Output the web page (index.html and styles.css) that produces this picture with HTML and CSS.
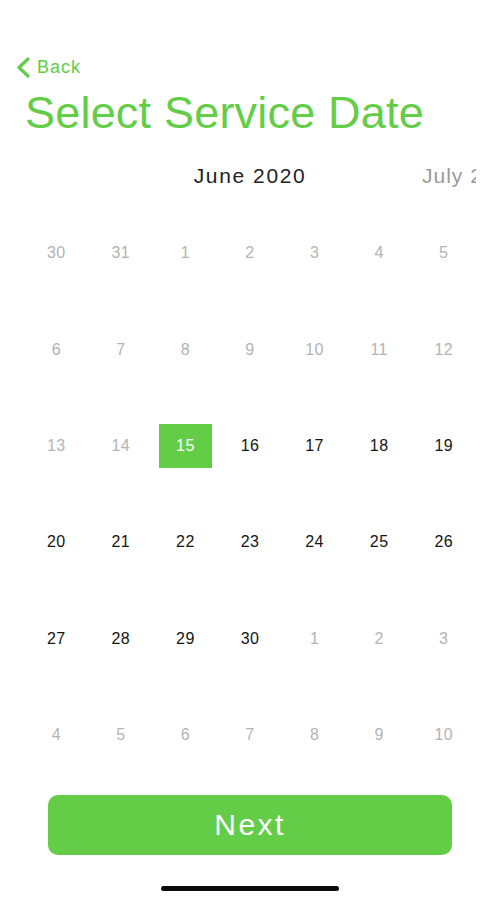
FILE: index.html
```html
<!DOCTYPE html>
<html lang="en">
<head>
<meta charset="utf-8">
<title>Select Service Date</title>
<link rel="stylesheet" href="styles.css">
</head>
<body>
<div class="screen">
  <nav class="nav">
    <a class="back" href="#">
      <svg class="chev" width="16" height="21" viewBox="0 0 16 21"><path d="M13 2 L4 10.5 L13 19" fill="none" stroke="#63cd47" stroke-width="3.2" stroke-linecap="round" stroke-linejoin="round"/></svg>
      <span>Back</span>
    </a>
  </nav>
  <h1 class="title">Select Service Date</h1>
  <div class="months">
    <div class="month-track">
      <div class="month current">June 2020</div>
      <div class="month next-month">July 2020</div>
    </div>
  </div>
  <div class="grid">
    <div class="day muted">30</div><div class="day muted">31</div><div class="day muted">1</div><div class="day muted">2</div><div class="day muted">3</div><div class="day muted">4</div><div class="day muted">5</div>
    <div class="day muted">6</div><div class="day muted">7</div><div class="day muted">8</div><div class="day muted">9</div><div class="day muted">10</div><div class="day muted">11</div><div class="day muted">12</div>
    <div class="day muted">13</div><div class="day muted">14</div><div class="day"><span class="sel">15</span></div><div class="day">16</div><div class="day">17</div><div class="day">18</div><div class="day">19</div>
    <div class="day">20</div><div class="day">21</div><div class="day">22</div><div class="day">23</div><div class="day">24</div><div class="day">25</div><div class="day">26</div>
    <div class="day">27</div><div class="day">28</div><div class="day">29</div><div class="day">30</div><div class="day muted">1</div><div class="day muted">2</div><div class="day muted">3</div>
    <div class="day muted">4</div><div class="day muted">5</div><div class="day muted">6</div><div class="day muted">7</div><div class="day muted">8</div><div class="day muted">9</div><div class="day muted">10</div>
  </div>
  <button class="next">Next</button>
  <div class="home-indicator"></div>
</div>
</body>
</html>
```

FILE: styles.css
```css
* { box-sizing: border-box; }
html, body { margin: 0; padding: 0; background: #fff; }
body { font-family: "Liberation Sans", Arial, sans-serif; }

.screen {
  width: 500px;
  height: 900px;
  display: flex;
  flex-direction: column;
  overflow: hidden;
}

.nav {
  padding: 56px 0 0 15px;
  height: 80px;
}
.back {
  display: flex;
  align-items: center;
  gap: 6px;
  color: #63cd47;
  text-decoration: none;
  font-size: 18px;
  letter-spacing: 1px;
  line-height: 22px;
}
.chev { display: block; }

.title {
  margin: 7px 0 0 25px;
  font-size: 45px;
  font-weight: normal;
  line-height: 52px;
  color: #63cd47;
  letter-spacing: 0.2px;
}

.months {
  margin: 25px 24px 0;
  overflow: hidden;
  height: 24px;
}
.month-track {
  display: flex;
  padding-left: 113px;
}
.month {
  flex: 0 0 226px;
  text-align: center;
  font-size: 21px;
  line-height: 24px;
  letter-spacing: 1.6px;
  white-space: nowrap;
}
.current { color: #222; }
.next-month {
  color: #9a9a9a;
  text-align: left;
  padding-left: 59px;
  letter-spacing: 1px;
}

.grid {
  margin: 17px 24px 0;
  display: grid;
  grid-template-columns: repeat(7, 1fr);
  grid-auto-rows: 96.4px;
}
.day {
  display: flex;
  align-items: center;
  justify-content: center;
  font-size: 16px;
  color: #151515;
  letter-spacing: 0.4px;
}
.day.muted { color: #b3b3b3; }
.sel {
  width: 53px;
  height: 44px;
  display: flex;
  align-items: center;
  justify-content: center;
  background: #63cd47;
  color: #fff;
}

.next {
  margin: 12px 48px 0;
  height: 60px;
  border: none;
  border-radius: 10px;
  background: #63cd47;
  color: #fff;
  font-family: "Liberation Sans", Arial, sans-serif;
  font-size: 30px;
  letter-spacing: 2.4px;
  padding: 0;
}

.home-indicator {
  margin: 31px auto 0;
  width: 178px;
  height: 5px;
  border-radius: 3px;
  background: #0a0a0a;
}
```
